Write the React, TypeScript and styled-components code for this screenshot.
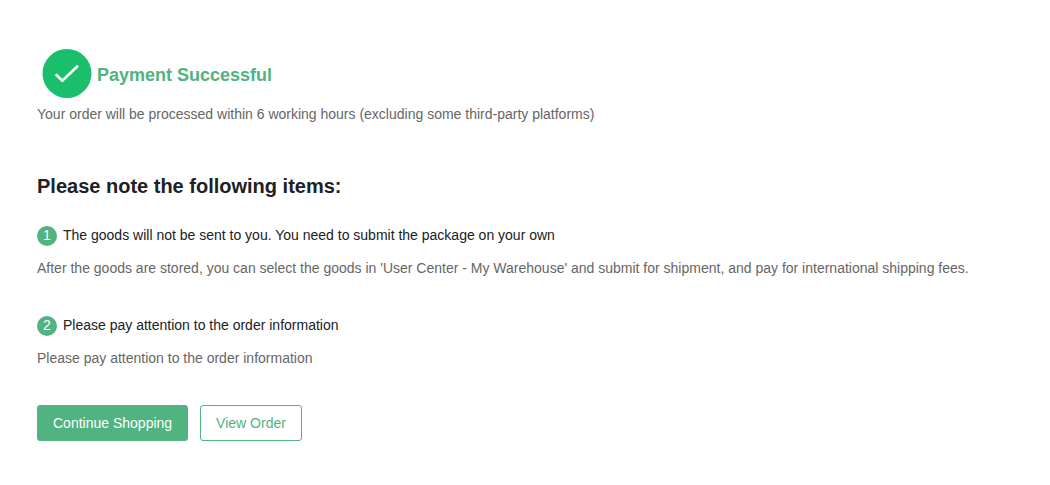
import React from "react";
import styled, { createGlobalStyle } from "styled-components";

const GlobalStyle = createGlobalStyle`
  *, *::before, *::after { box-sizing: border-box; }
  body {
    margin: 0;
    background: #ffffff;
    color: #202124;
    font-family: "Liberation Sans", Arial, Helvetica, sans-serif;
    font-size: 14px;
    line-height: 20px;
  }
`;

const Page = styled.main`
  padding: 48px 37px 44px;
`;

const Status = styled.header`
  display: flex;
  align-items: center;
  gap: 5px;
  padding-left: 5px;
`;

const StatusIcon = styled.svg`
  flex: none;
  width: 50px;
  height: 50px;
`;

const StatusTitle = styled.h1`
  margin: 0;
  padding-top: 4px;
  color: #50b380;
  font-size: 18px;
  line-height: 24px;
`;

const Text = styled.p`
  margin: 0;
  color: #666666;
`;

const StatusText = styled(Text)`
  margin-top: 6px;
`;

const NotesTitle = styled.h2`
  margin: 48px 0 0;
  font-size: 20px;
  line-height: 28px;
`;

const NoteList = styled.ol`
  display: grid;
  gap: 38px;
  margin: 26px 0 0;
  padding: 0;
  list-style: none;
`;

const NoteHeading = styled.h3`
  display: flex;
  align-items: flex-start;
  gap: 6px;
  margin: 0 0 12px;
  font-size: 14px;
  font-weight: 400;
  line-height: 18px;
`;

const NoteNumber = styled.span`
  flex: none;
  width: 20px;
  height: 20px;
  border-radius: 50%;
  background: #50b380;
  color: #ffffff;
  text-align: center;
`;

const Actions = styled.div`
  display: flex;
  flex-wrap: wrap;
  gap: 12px;
  margin-top: 37px;
`;

const Button = styled.button<{ $primary?: boolean }>`
  height: 36px;
  padding: 0 15px;
  border: 1px solid #50b380;
  border-radius: 3px;
  background: ${(p) => (p.$primary ? "#50b380" : "#ffffff")};
  color: ${(p) => (p.$primary ? "#ffffff" : "#50b380")};
  font: inherit;
  cursor: pointer;
`;

const notes = [
  {
    title: "The goods will not be sent to you. You need to submit the package on your own",
    text: "After the goods are stored, you can select the goods in 'User Center - My Warehouse' and submit for shipment, and pay for international shipping fees.",
  },
  {
    title: "Please pay attention to the order information",
    text: "Please pay attention to the order information",
  },
];

export default function App() {
  return (
    <>
      <GlobalStyle />
      <Page>
        <Status>
          <StatusIcon viewBox="0 0 50 50" aria-hidden="true">
            <circle cx="25" cy="25.5" r="24.5" fill="#1bbf6b" />
            <path d="M13.7 26.3 L20.3 32.8 L36 17.7" fill="none" stroke="#ffffff" strokeWidth="2.6" />
          </StatusIcon>
          <StatusTitle>Payment Successful</StatusTitle>
        </Status>
        <StatusText>
          Your order will be processed within 6 working hours (excluding some third-party platforms)
        </StatusText>
        <NotesTitle>Please note the following items:</NotesTitle>
        <NoteList>
          {notes.map((note, i) => (
            <li key={note.title}>
              <NoteHeading>
                <NoteNumber>{i + 1}</NoteNumber>
                {note.title}
              </NoteHeading>
              <Text>{note.text}</Text>
            </li>
          ))}
        </NoteList>
        <Actions>
          <Button type="button" $primary>Continue Shopping</Button>
          <Button type="button">View Order</Button>
        </Actions>
      </Page>
    </>
  );
}
